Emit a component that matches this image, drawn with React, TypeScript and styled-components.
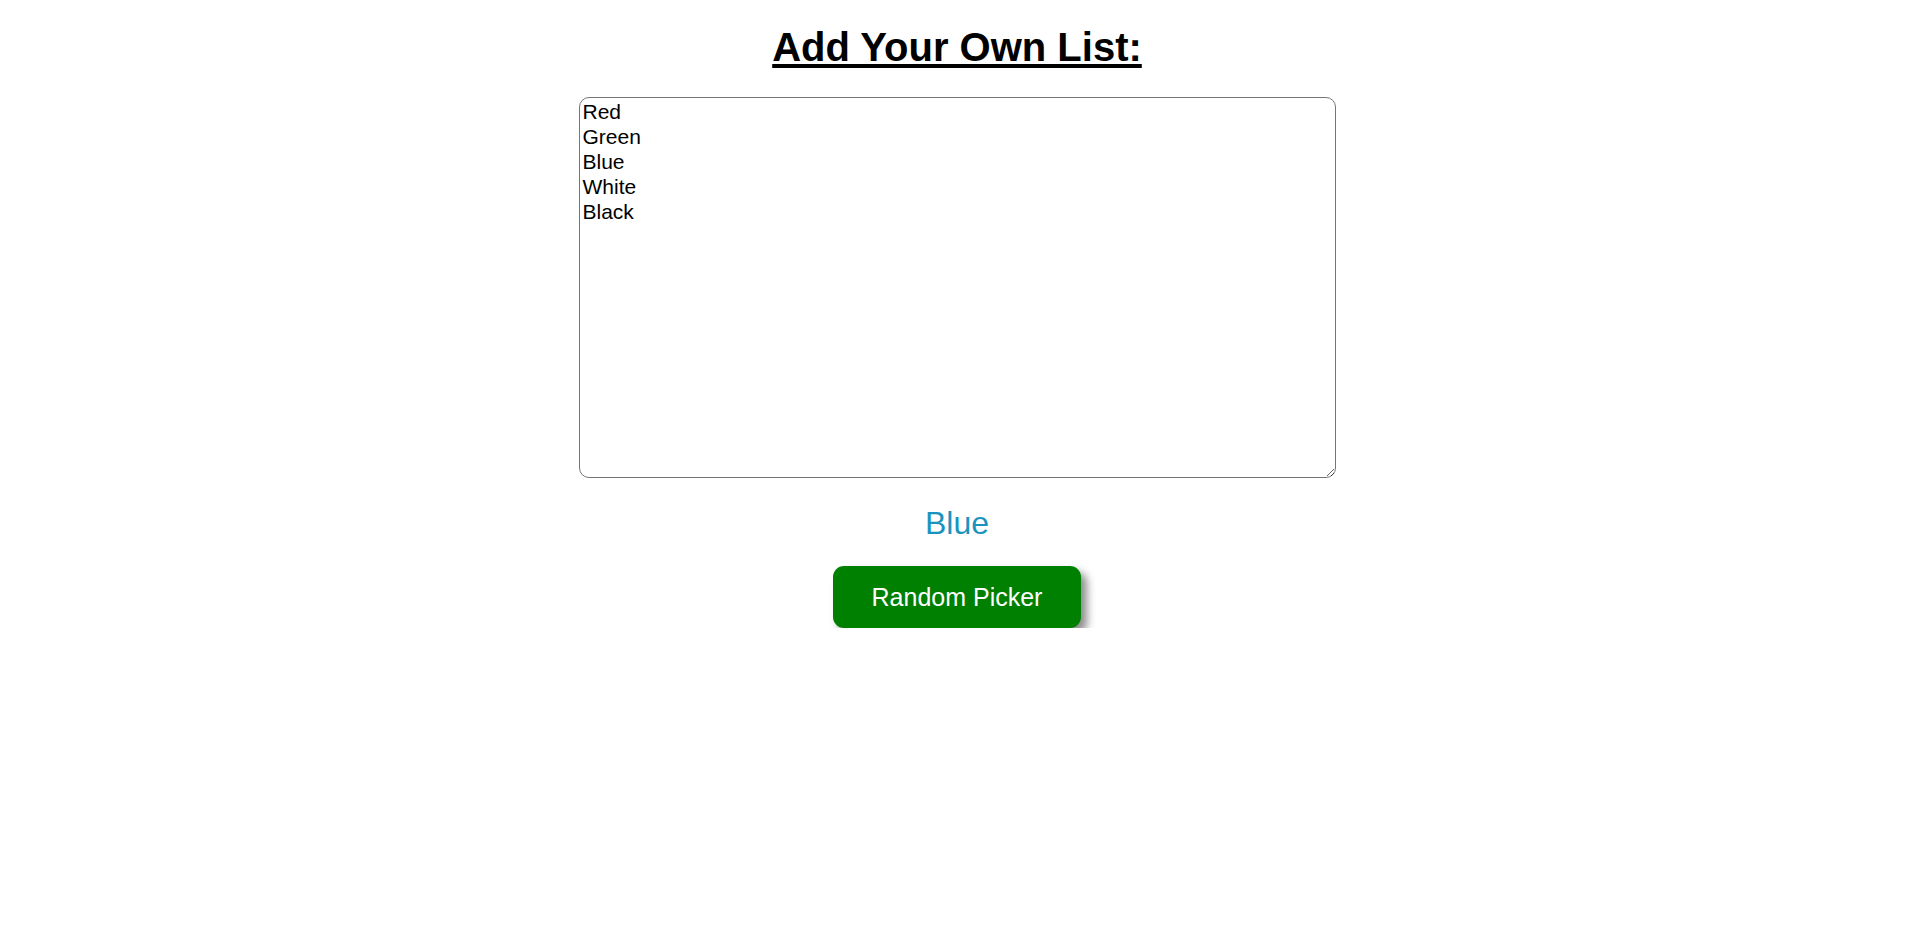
import { useState } from 'react';
import styled, { createGlobalStyle } from 'styled-components';

const GlobalStyle = createGlobalStyle`
  body {
    margin: 0;
    background: #fff;
    font-family: 'Liberation Sans', Arial, sans-serif;
  }
`;

const Page = styled.main`
  display: flex;
  flex-direction: column;
  align-items: center;
  padding: 24px 3px 0 0;
`;

const Heading = styled.h1`
  margin: 0;
  font-size: 40px;
  line-height: 46px;
  font-weight: 700;
  color: #000;
  text-decoration: underline;
  text-decoration-thickness: 4px;
  text-underline-offset: 3px;
`;

const ListInput = styled.textarea`
  box-sizing: border-box;
  margin-top: 27px;
  width: 757px;
  height: 381px;
  padding: 1px 3px 2px;
  border: 1px solid #767676;
  border-radius: 10px;
  font-family: 'Liberation Sans', Arial, sans-serif;
  font-size: 21px;
  line-height: 25px;
  color: #000;
  outline: none;
`;

const Result = styled.div`
  margin-top: 27px;
  font-size: 32px;
  line-height: 37px;
  color: #1a94bf;
`;

const PickButton = styled.button`
  margin-top: 24px;
  padding: 16px 39px;
  border: none;
  border-radius: 11px;
  background: #008000;
  color: #fff;
  font-family: 'Liberation Sans', Arial, sans-serif;
  font-size: 25px;
  line-height: 30px;
  box-shadow: 6px 6px 8px rgba(0, 0, 0, 0.45);
  cursor: pointer;
`;

export default () => {
  const [list, setList] = useState('Red\nGreen\nBlue\nWhite\nBlack');
  const [picked, setPicked] = useState('Blue');

  const pick = () => {
    const items = list.split('\n').map((s) => s.trim()).filter(Boolean);
    if (items.length) setPicked(items[Math.floor(Math.random() * items.length)]);
  };

  return (
    <Page>
      <GlobalStyle />
      <Heading>Add Your Own List:</Heading>
      <ListInput value={list} onChange={(e) => setList(e.target.value)} />
      <Result>{picked}</Result>
      <PickButton onClick={pick}>Random Picker</PickButton>
    </Page>
  );
};
